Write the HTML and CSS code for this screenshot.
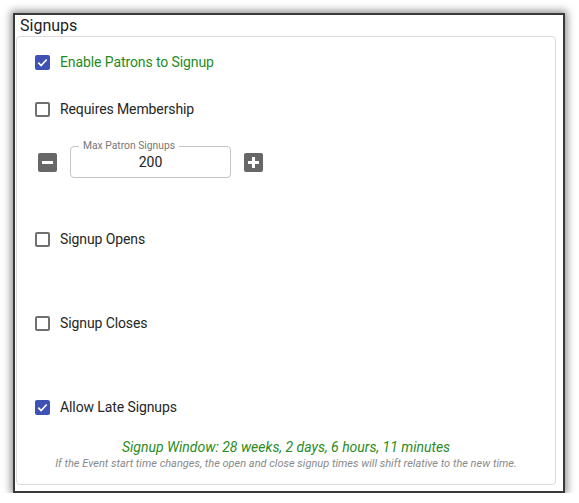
FILE: index.html
```html
<!DOCTYPE html>
<html>
<head>
<meta charset="utf-8">
<link rel="stylesheet" href="styles.css">
</head>
<body>
<div class="frame">
  <div class="title">Signups</div>
  <div class="card">
    <label class="check-row row-enable">
      <span class="box checked"><svg viewBox="0 0 16 16" width="15" height="15"><path d="M3.5 8.2l3 3 6-6.4" fill="none" stroke="#fff" stroke-width="1.8"/></svg></span>
      <span class="label green">Enable Patrons to Signup</span>
    </label>
    <label class="check-row row-member">
      <span class="box"></span>
      <span class="label">Requires Membership</span>
    </label>
    <div class="number-row">
      <button class="step"><svg viewBox="0 0 19 19" width="19" height="19"><rect x="4" y="8" width="11" height="3" fill="#fff"/></svg></button>
      <div class="field">
        <span class="field-label">Max Patron Signups</span>
        <span class="field-value">200</span>
      </div>
      <button class="step"><svg viewBox="0 0 19 19" width="19" height="19"><rect x="4" y="8" width="11" height="3" fill="#fff"/><rect x="8" y="4" width="3" height="11" fill="#fff"/></svg></button>
    </div>
    <label class="check-row row-opens">
      <span class="box"></span>
      <span class="label">Signup Opens</span>
    </label>
    <label class="check-row row-closes">
      <span class="box"></span>
      <span class="label">Signup Closes</span>
    </label>
    <label class="check-row row-late">
      <span class="box checked"><svg viewBox="0 0 16 16" width="15" height="15"><path d="M3.5 8.2l3 3 6-6.4" fill="none" stroke="#fff" stroke-width="1.8"/></svg></span>
      <span class="label">Allow Late Signups</span>
    </label>
    <div class="window">Signup Window: 28 weeks, 2 days, 6 hours, 11 minutes</div>
    <div class="note">If the Event start time changes, the open and close signup times will shift relative to the new time.</div>
  </div>
</div>
</body>
</html>
```
FILE: styles.css
```css
html, body {
  margin: 0;
  padding: 0;
  background: #fff;
}
body {
  font-family: Roboto, "Liberation Sans", Arial, sans-serif;
  color: #222;
}
.frame {
  margin: 13px 0 0 13px;
  border: 2px solid #3a3a3a;
  box-shadow: 0 0 8px 2px rgba(0,0,0,0.45);
  padding: 0 7px 6px 1px;
  box-sizing: content-box;
  width: 540px;
  height: 470px;
  display: flex;
  flex-direction: column;
}
.title {
  height: 21px;
  line-height: 21px;
  font-size: 16px;
  padding-left: 4px;
  color: #1c1c1c;
}
.card {
  flex: 1;
  border: 1px solid #dcdcdc;
  border-radius: 4px;
  padding: 0 0 0 18px;
  display: flex;
  flex-direction: column;
}
.check-row {
  display: flex;
  align-items: center;
  height: 24px;
  gap: 10px;
}
.box {
  width: 15px;
  height: 15px;
  box-sizing: border-box;
  border: 2px solid #707070;
  border-radius: 2px;
  display: flex;
  align-items: center;
  justify-content: center;
}
.box.checked {
  background: #3f51b5;
  border-color: #3f51b5;
}
.box.checked svg {
  flex: none;
}
.label {
  font-size: 14px;
  letter-spacing: -0.1px;
  color: #262626;
}
.label.green {
  color: #1e8c1e;
}
.row-enable { margin-top: 13px; }
.row-member { margin-top: 23px; }
.number-row {
  margin-top: 25px;
  display: flex;
  align-items: center;
  height: 32px;
  margin-left: 3px;
}
.step {
  width: 19px;
  height: 19px;
  padding: 0;
  border: none;
  border-radius: 2px;
  background: #676767;
  display: flex;
}
.field {
  position: relative;
  width: 161px;
  height: 32px;
  box-sizing: border-box;
  border: 1px solid #c4c4c4;
  border-radius: 4px;
  margin: 0 13px 0 13px;
  display: flex;
  align-items: center;
  justify-content: center;
}
.field-label {
  position: absolute;
  top: -7px;
  left: 8px;
  background: #fff;
  padding: 0 4px;
  font-size: 10.3px;
  line-height: 12px;
  color: #777;
}
.field-value {
  font-size: 14px;
  color: #222;
}
.row-opens { margin-top: 49px; }
.row-closes { margin-top: 60px; }
.row-late { margin-top: 60px; }
.window {
  margin-top: 19px;
  margin-left: -18px;
  text-align: center;
  font-style: italic;
  font-size: 14px;
  color: #2a8c1e;
  line-height: 18px;
}
.note {
  margin-top: 1px;
  margin-left: -18px;
  text-align: center;
  font-style: italic;
  font-size: 11px;
  color: #8a8a8a;
  line-height: 14px;
}
```
